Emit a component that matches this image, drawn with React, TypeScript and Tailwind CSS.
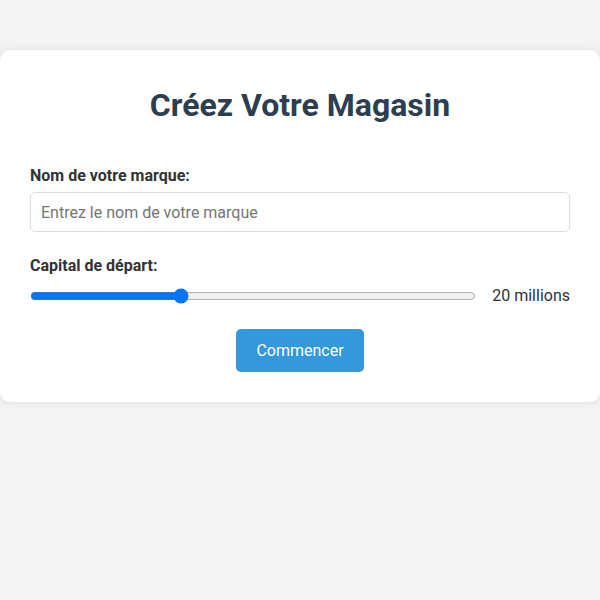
import { useState } from 'react'

export default function App(): React.JSX.Element {
  const [capital, setCapital] = useState(20)

  return (
    <div className="min-h-screen bg-[#f4f4f4] pt-[50px] font-['Roboto',sans-serif]">
      {/* Card */}
      <div className="mx-auto max-w-[600px] rounded-[10px] bg-white p-[30px] shadow-[0_0_10px_rgba(0,0,0,0.1)]">
        <h1 className="mt-[7px] mb-[40px] text-center text-[32px] leading-[37px] font-bold text-[#2c3e50]">
          Créez Votre Magasin
        </h1>

        {/* Brand name */}
        <label className="mb-1 block text-base leading-6 font-bold text-[#333]">Nom de votre marque:</label>
        <input
          type="text"
          placeholder="Entrez le nom de votre marque"
          className="box-border h-10 w-full rounded-[5px] border border-[#ddd] px-[10px] text-base text-[#333] placeholder:text-[#757575] focus:outline-none"
        />

        {/* Starting capital */}
        <label className="mt-[22px] mb-[6px] block text-base leading-6 font-bold text-[#333]">
          Capital de départ:
        </label>
        <div className="flex h-6 items-center gap-4">
          <input
            type="range"
            min={5}
            max={50}
            value={capital}
            onChange={(e) => setCapital(Number(e.target.value))}
            className="m-0 flex-1"
          />
          <span className="text-base leading-6 text-[#333]">{capital} millions</span>
        </div>

        <div className="mt-[21px] flex justify-center">
          <button className="h-[43px] rounded-[5px] bg-[#3498db] px-5 text-base text-white">Commencer</button>
        </div>
      </div>
    </div>
  )
}
